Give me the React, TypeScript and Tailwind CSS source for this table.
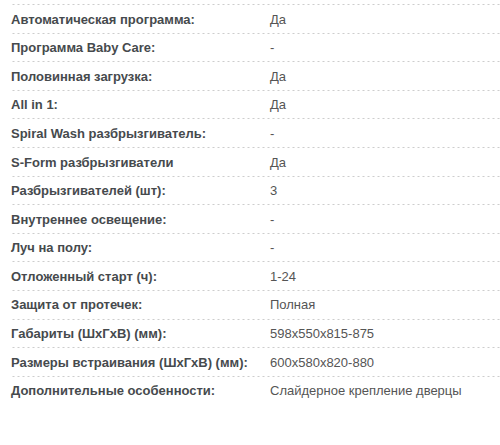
const specs: [string, string][] = [
  ["Автоматическая программа:", "Да"],
  ["Программа Baby Care:", "-"],
  ["Половинная загрузка:", "Да"],
  ["All in 1:", "Да"],
  ["Spiral Wash разбрызгиватель:", "-"],
  ["S-Form разбрызгиватели", "Да"],
  ["Разбрызгивателей (шт):", "3"],
  ["Внутреннее освещение:", "-"],
  ["Луч на полу:", "-"],
  ["Отложенный старт (ч):", "1-24"],
  ["Защита от протечек:", "Полная"],
  ["Габариты (ШхГхВ) (мм):", "598x550x815-875"],
  ["Размеры встраивания (ШхГхВ) (мм):", "600x580x820-880"],
  ["Дополнительные особенности:", "Слайдерное крепление дверцы"],
];

// dotted separator drawn as a repeating gradient
const dots =
  "bg-[linear-gradient(to_right,#cdcdcd_40%,transparent_40%)] bg-[length:5px_1px] bg-repeat-x";

export default function App() {
  return (
    <div className="w-[500px] h-[445px] bg-white pt-[4px] pl-[10px] font-['Liberation_Sans',Arial,sans-serif] text-[13px]">
      <div className={dots + " bg-top pt-[1px]"}>
        {specs.map(([label, value], i) => (
          <div
            key={label}
            className={
              "flex items-center h-[28.6px] " +
              (i < specs.length - 1 ? dots + " bg-bottom" : "")
            }
          >
            <div className="w-[260px] pl-[1px] font-bold text-[#464a4d]">{label}</div>
            <div className="text-[#555555]">{value}</div>
          </div>
        ))}
      </div>
    </div>
  );
}
